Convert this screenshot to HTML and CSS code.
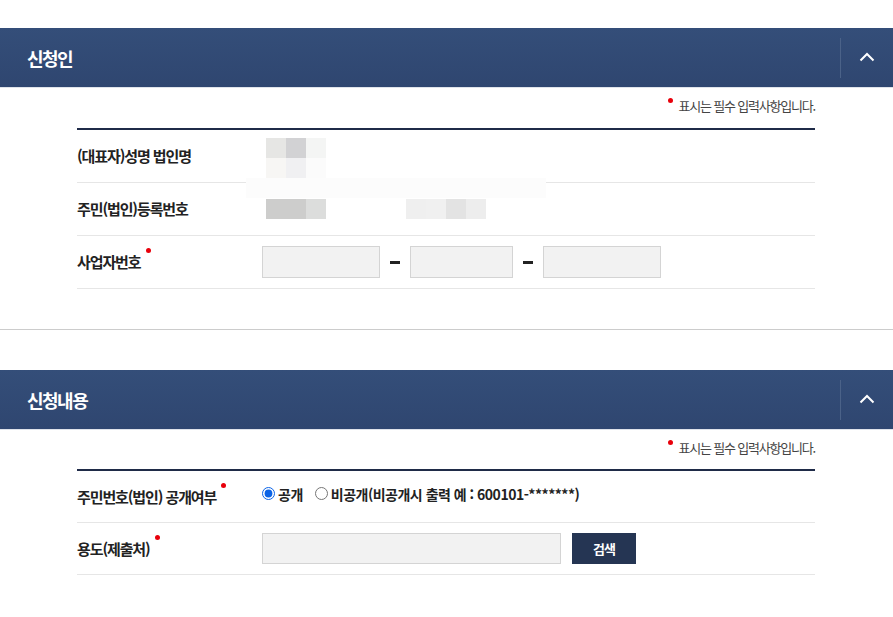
FILE: index.html
```html
<!DOCTYPE html>
<html lang="ko">
  <head>
    <meta charset="UTF-8" />
    <meta name="viewport" content="width=device-width, initial-scale=1.0" />
    <title>신청서 작성</title>
    <link rel="stylesheet" href="styles.css">
  </head>
  <body>
    <section class="panel">
      <div class="panel-head">
        <h2>신청인</h2>
        <button class="fold" type="button" aria-label="접기">
          <svg width="16" height="10" viewBox="0 0 16 10"><polyline points="1.5,8.5 8,2 14.5,8.5" fill="none" stroke="#fff" stroke-width="2" /></svg>
        </button>
      </div>
      <div class="panel-body">
        <p class="note"><span class="req req-note"></span>표시는 필수 입력사항입니다.</p>
        <div class="form">
          <div class="row row-name">
            <div class="label">(대표자)성명 법인명</div>
            <div class="field field-top">
              <div class="pix">
                <i style="background:#e6e6e4"></i><i style="background:#d2d2d4"></i><i style="background:#f4f5f4"></i>
                <i style="background:#f7f6f4"></i><i style="background:#f0f0f2"></i><i style="background:#fbfbfb"></i>
              </div>
            </div>
            <div class="smudge"></div>
          </div>
          <div class="row">
            <div class="label">주민(법인)등록번호</div>
            <div class="field">
              <div class="pix">
                <i style="background:#cdcdcc"></i><i style="background:#cdcdcc"></i><i style="background:#dcdddc"></i>
              </div>
              <div class="pix pix-four">
                <i style="background:#efefef"></i><i style="background:#f0f0f0"></i><i style="background:#e3e3e3"></i><i style="background:#ededed"></i>
              </div>
            </div>
          </div>
          <div class="row">
            <div class="label">사업자번호<span class="req req-label"></span></div>
            <div class="field">
              <input class="box box-wide" type="text" />
              <span class="dash"></span>
              <input class="box box-mid" type="text" />
              <span class="dash"></span>
              <input class="box box-wide" type="text" />
            </div>
          </div>
        </div>
      </div>
    </section>

    <hr class="divider" />

    <section class="panel">
      <div class="panel-head">
        <h2>신청내용</h2>
        <button class="fold" type="button" aria-label="접기">
          <svg width="16" height="10" viewBox="0 0 16 10"><polyline points="1.5,8.5 8,2 14.5,8.5" fill="none" stroke="#fff" stroke-width="2" /></svg>
        </button>
      </div>
      <div class="panel-body">
        <p class="note"><span class="req req-note"></span>표시는 필수 입력사항입니다.</p>
        <div class="form form-compact">
          <div class="row">
            <div class="label">주민번호(법인) 공개여부<span class="req req-label"></span></div>
            <div class="field radios">
              <label><input type="radio" name="open" checked />공개</label>
              <label><input type="radio" name="open" />비공개(비공개시 출력 예 : 600101-*******)</label>
            </div>
          </div>
          <div class="row">
            <div class="label">용도(제출처)<span class="req req-label"></span></div>
            <div class="field">
              <input class="box box-long" type="text" />
              <button class="search" type="button">검색</button>
            </div>
          </div>
        </div>
      </div>
    </section>
  </body>
</html>
```

FILE: styles.css
```css
body {
  margin: 0;
  padding-top: 28px;
  background-color: #fff;
  font-family: "Noto Sans CJK KR", "Noto Sans", sans-serif;
  color: #222;
}

.panel-head {
  display: flex;
  align-items: center;
  justify-content: space-between;
  height: 59px;
  padding-left: 27px;
  background: linear-gradient(to bottom, #344e79, #2f4670);
  border-bottom: 1px solid #dfe3ea;
}

.panel-head h2 {
  margin: 0;
  font-size: 18px;
  font-weight: 700;
  letter-spacing: -1.5px;
  color: #fff;
}

.fold {
  display: flex;
  align-items: center;
  justify-content: center;
  width: 53px;
  height: 40px;
  padding: 0 0 2px 0;
  border: none;
  border-left: 1px solid #4b6288;
  background: none;
  cursor: pointer;
}

.panel-body {
  padding: 0 78px 0 77px;
}

.note {
  margin: 0;
  height: 40px;
  padding-top: 9px;
  box-sizing: border-box;
  text-align: right;
  font-size: 13px;
  line-height: 18px;
  letter-spacing: -1.2px;
  color: #444;
}

.req {
  display: inline-block;
  width: 5px;
  height: 5px;
  border-radius: 50%;
  background-color: #e8000b;
  position: relative;
}

.req-note {
  margin-right: 6px;
  vertical-align: middle;
  top: -7px;
}

.req-label {
  margin-left: 5px;
  vertical-align: middle;
  top: -13px;
}

.form {
  border-top: 2px solid #1f2b48;
}

.row {
  position: relative;
  display: flex;
  align-items: center;
  height: 52px;
  border-bottom: 1px solid #e6e6e6;
}

.form-compact {
  margin-top: -1px;
}

.form-compact .row {
  height: 51px;
}

.label {
  width: 185px;
  flex-shrink: 0;
  font-size: 15px;
  font-weight: 700;
  letter-spacing: -1.1px;
  line-height: 20px;
}

.field {
  display: flex;
  align-items: center;
}

.row-name {
  align-items: flex-start;
}

.row-name .label {
  padding-top: 16px;
}

.field-top {
  padding-top: 8px;
}

.pix {
  display: grid;
  grid-template-columns: repeat(3, 20px);
  grid-auto-rows: 20px;
  margin-left: 4px;
}

.pix-four {
  grid-template-columns: repeat(4, 20px);
  margin-left: 80px;
}

.smudge {
  position: absolute;
  left: 169px;
  top: 48px;
  width: 300px;
  height: 20px;
  background-color: #fcfcfc;
}

.box {
  height: 32px;
  box-sizing: border-box;
  border: 1px solid #d4d4d4;
  background-color: #f2f2f2;
  font: inherit;
  padding: 0 8px;
}

.box-wide {
  width: 118px;
}

.box-mid {
  width: 103px;
}

.box-long {
  width: 299px;
  height: 31px;
}

.dash {
  width: 10px;
  height: 3px;
  margin: 0 10px;
  background-color: #222;
}

.radios {
  gap: 12px;
  font-size: 14px;
  font-weight: 700;
  letter-spacing: -0.5px;
  margin-top: -6px;
}

.radios label {
  display: flex;
  align-items: center;
}

.radios input {
  width: 13px;
  height: 13px;
  margin: 0 3px 0 0;
  accent-color: #0b63e6;
}

.search {
  width: 64px;
  height: 31px;
  margin-left: 11px;
  border: none;
  background-color: #253553;
  color: #fff;
  font-family: inherit;
  font-size: 13px;
  font-weight: 700;
  letter-spacing: -1px;
  cursor: pointer;
}

.divider {
  margin: 40px 0;
  height: 0;
  border: none;
  border-top: 1px solid #cccccc;
}
```
